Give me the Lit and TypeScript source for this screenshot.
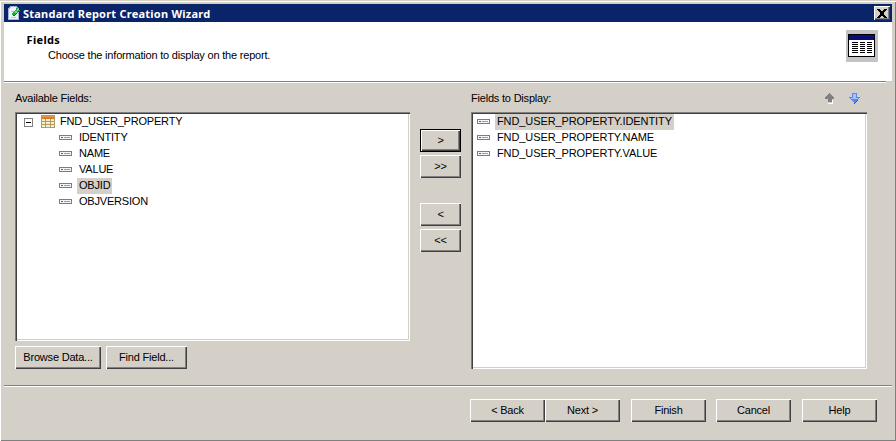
import { LitElement, html, css } from "lit";
import { customElement } from "lit/decorators.js";

const fieldIcon = html`<svg class="ficon" width="13" height="5" viewBox="0 0 13 5" shape-rendering="crispEdges">
  <rect x="0.5" y="0.5" width="12" height="4" fill="#f2f5fc" stroke="#5a7fd0"/>
  <rect x="2" y="2" width="2" height="1" fill="#3f64c0"/>
  <rect x="5" y="2" width="6" height="1" fill="#98a0b0"/>
</svg>`;

const tableIcon = html`<svg class="ticon" width="14" height="13" viewBox="0 0 14 13" shape-rendering="crispEdges">
  <rect x="0" y="0" width="14" height="13" fill="#b09a68"/>
  <rect x="1" y="1" width="12" height="1" fill="#e8a048"/>
  <rect x="1" y="2" width="12" height="2" fill="#d87c30"/>
  <path d="M1 4h3v2H1zM5 4h4v2H5zM10 4h3v2h-3zM1 7h3v2H1zM5 7h4v2H5zM10 7h3v2h-3zM1 10h3v2H1zM5 10h4v2H5zM10 10h3v2h-3z" fill="#f6efc8"/>
</svg>`;

@customElement("app-root")
export class AppRoot extends LitElement {
  static styles = css`
    :host {
      display: block;
      width: 896px;
      height: 441px;
      overflow: hidden;
      font-family: "Liberation Sans", Arial, sans-serif;
      font-size: 11px;
      letter-spacing: -0.2px;
      color: #000;
      background: #d4d0c8;
    }
    .window {
      box-sizing: border-box;
      width: 896px;
      height: 441px;
      padding: 3px 4px 0;
      display: flex;
      flex-direction: column;
      border-top: 1px solid #d4d0c8;
      box-shadow: inset 1px 1px 0 #fff, inset -1px -1px 0 #808080;
    }
    .title {
      height: 18px;
      background: #0a246a;
      color: #fff;
      display: flex;
      align-items: center;
      font-family: "Noto Sans", sans-serif;
      font-weight: 700;
      font-size: 11px;
      letter-spacing: 0.23px;
      padding-left: 2px;
      flex: none;
    }
    .title svg { flex: none; }
    .title span { flex: 1; margin-left: 1px; }
    .close {
      width: 16px;
      height: 14px;
      margin-right: 2px;
      background: #d4d0c8;
      box-shadow: inset 1px 1px 0 #fff, inset -1px -1px 0 #404040, inset -2px -2px 0 #808080;
      display: flex;
      align-items: center;
      justify-content: center;
    }
    .close svg { margin: 0; }
    .head {
      height: 59px;
      background: #fff;
      flex: none;
      display: flex;
      justify-content: space-between;
      padding: 8px 14px 0 22px;
      box-sizing: border-box;
    }
    .head .text { padding-top: 3px; }
    .head b { display: block; font-family: "Noto Sans", sans-serif; font-size: 11px; line-height: 14px; letter-spacing: 0.35px; padding-left: 0.5px; }
    .head p { margin: 0 0 0 22px; line-height: 16px; }
    .head svg { flex: none; }
    .sep {
      flex: none;
      height: 2px;
      background: linear-gradient(#808080 1px, #fff 1px);
    }
    .sep.top { margin-right: 6px; }
    .body {
      flex: none;
      height: 302px;
      display: flex;
      gap: 10px;
      padding: 0 0 0 11px;
      box-sizing: border-box;
    }
    .col { display: flex; flex-direction: column; flex: none; }
    .col.left { width: 395px; }
    .col.right { width: 396px; }
    .col.mid { width: 41px; padding-top: 46px; gap: 3px; }
    .gap { height: 19px; }
    .label {
      height: 29px;
      flex: none;
      display: flex;
      align-items: center;
      justify-content: space-between;
      padding-top: 1px;
      box-sizing: border-box;
    }
    .updown { display: flex; gap: 14px; margin-right: 7px; }
    .list {
      flex: none;
      box-sizing: border-box;
      background: #fff;
      box-shadow: inset 1px 1px 0 #808080, inset 2px 2px 0 #404040, inset -1px -1px 0 #fff, inset -2px -2px 0 #d4d0c8;
      padding: 2px;
    }
    .left .list { height: 229px; }
    .right .list { height: 257px; }
    .rows { display: flex; flex-direction: column; }
    .row { height: 16px; display: flex; align-items: center; white-space: nowrap; }
    .row .txt { padding: 0 2px; line-height: 15px; height: 16px; }
    .row .txt.sel { background: #d4d0c8; }
    .ficon { flex: none; margin-bottom: 1px; }
    .tree .row { padding-left: 42px; }
    .tree .row.root { padding-left: 7px; }
    .tree .ficon { margin-right: 5px; }
    .tree .ticon { flex: none; margin: 0 3px 1px 8px; }
    .exp { width: 9px; height: 9px; flex: none; }
    .fields { letter-spacing: -0.1px; }
    .fields .row { padding-left: 4px; }
    .fields .ficon { margin-right: 5px; }
    .btnrow { display: flex; gap: 5px; margin-top: 5px; }
    button {
      all: unset;
      box-sizing: border-box;
      display: flex;
      align-items: center;
      justify-content: center;
      height: 23px;
      padding-bottom: 1px;
      flex: none;
      font: inherit;
      letter-spacing: inherit;
      color: #000;
      background: #d4d0c8;
      box-shadow: inset 1px 1px 0 #fff, inset -1px -1px 0 #404040, inset -2px -2px 0 #808080;
    }
    button.def {
      box-shadow: inset 0 0 0 1px #000, inset 2px 2px 0 #fff, inset -2px -2px 0 #404040, inset -3px -3px 0 #808080;
    }
    .mid button { width: 41px; }
    .browse { width: 86px; }
    .find { width: 81px; }
    .footer {
      flex: none;
      display: flex;
      padding: 12px 15px 0 466px;
    }
    .footer button { width: 75px; }
    .footer .next { margin-right: 11px; }
    .footer .finish { margin-right: 10px; }
    .footer .cancel { margin-right: 11px; }
  `;

  render() {
    const avail = ["IDENTITY", "NAME", "VALUE", "OBJID", "OBJVERSION"];
    const disp = ["FND_USER_PROPERTY.IDENTITY", "FND_USER_PROPERTY.NAME", "FND_USER_PROPERTY.VALUE"];
    return html`
      <div class="window">
        <div class="title">
          <svg width="16" height="18" viewBox="0 0 16 18" shape-rendering="crispEdges">
            <path d="M2 4h1V3h1V2h7v1h1v1h1v12H2z" fill="#9fb4dc"/>
            <path d="M3 5h1V4h1V3h5v1h1v2h1v9H3z" fill="#eef3fb"/>
            <path d="M5 7h3v1H5zM5 13h5v1H5z" fill="#b4c4e4"/>
            <path d="M10 4h2v2h2v2h-2v1h-1v1h-1v1H9v1H7v-1H6V9h1V8h1V7h1V6h1z" fill="#22b03c"/>
            <path d="M11 5h1v2h-1zM9 7h2v2H9z" fill="#7fe07a"/>
            <path d="M7 11h2v1H7zM9 10h1v1H9zM10 9h1v1h-1zM12 8h2v-1h-2z" fill="#0a6a2a"/>
          </svg>
          <span>Standard Report Creation Wizard</span>
          <div class="close">
            <svg width="10" height="9" viewBox="0 0 10 9" shape-rendering="crispEdges"><path d="M0 0h3v1h1v1h2V1h1V0h3v1H9v1H8v1H7v3h1v1h1v1h1v1H7V8H6V7H4v1H3v1H0V8h1V7h1V6h1V3H2V2H1V1H0z" fill="#000"/></svg>
          </div>
        </div>
        <div class="head">
          <div class="text"><b>Fields</b><p>Choose the information to display on the report.</p></div>
          <svg width="32" height="32" viewBox="0 0 32 32" shape-rendering="crispEdges">
            <rect width="32" height="32" fill="#c4c4c8"/>
            <rect x="2.5" y="4.5" width="26" height="22" fill="#fff" stroke="#000"/>
            <rect x="3" y="5" width="25" height="5" fill="#0a0a78"/>
            <path d="M6 12.5H12M6 14.5H12M6 16.5H12M6 18.5H12M6 20.5H12M6 22.5H12M14 12.5H19M14 14.5H19M14 16.5H19M14 18.5H19M14 20.5H19M14 22.5H19M21 12.5H26M21 14.5H26M21 16.5H26M21 18.5H26M21 20.5H26M21 22.5H26" stroke="#000"/>
          </svg>
        </div>
        <div class="sep top"></div>
        <div class="body">
          <div class="col left">
            <div class="label">Available Fields:</div>
            <div class="list tree rows">
              <div class="row root">
                <svg class="exp" viewBox="0 0 9 9" shape-rendering="crispEdges"><rect x=".5" y=".5" width="8" height="8" fill="#fff" stroke="#808080"/><path d="M2 4.5H7" stroke="#000"/></svg>
                ${tableIcon}<span class="txt">FND_USER_PROPERTY</span>
              </div>
              ${avail.map((a) => html`<div class="row">${fieldIcon}<span class="txt ${a === "OBJID" ? "sel" : ""}">${a}</span></div>`)}
            </div>
            <div class="btnrow">
              <button class="browse">Browse Data...</button>
              <button class="find">Find Field...</button>
            </div>
          </div>
          <div class="col mid">
            <button class="def">&gt;</button>
            <button>&gt;&gt;</button>
            <div class="gap"></div>
            <button>&lt;</button>
            <button>&lt;&lt;</button>
          </div>
          <div class="col right">
            <div class="label">
              <span>Fields to Display:</span>
              <div class="updown">
                <svg width="11" height="11" viewBox="0 0 11 11" shape-rendering="crispEdges"><path d="M5 0h1v1h1v1h1v1h1v1h1v2H8v3H4V6H1V4h1V3h1V2h1V1h1z" fill="#808080"/><path d="M8 7h1v4H4v-1h4z" fill="#fff"/></svg>
                <svg width="11" height="11" viewBox="0 0 11 11" shape-rendering="crispEdges"><path d="M3 0h5v4h3v1h-1v1H9v1H8v1H7v1H6v1H5V9H4V8H3V7H2V6H1V5H0V4h3z" fill="#5f86e4"/><path d="M4 1h3v4h2v1H2V5h2z" fill="#a9c1f5"/><path d="M5 10h1v1H5zM6 9h1v1H6zM7 8h1v1H7zM8 7h1v1H8z" fill="#2f55b8"/></svg>
              </div>
            </div>
            <div class="list fields rows">
              ${disp.map((d, i) => html`<div class="row">${fieldIcon}<span class="txt ${i === 0 ? "sel" : ""}">${d}</span></div>`)}
            </div>
          </div>
        </div>
        <div class="sep"></div>
        <div class="footer">
          <button>&lt; Back</button>
          <button class="next">Next &gt;</button>
          <button class="finish">Finish</button>
          <button class="cancel">Cancel</button>
          <button>Help</button>
        </div>
      </div>
    `;
  }
}
